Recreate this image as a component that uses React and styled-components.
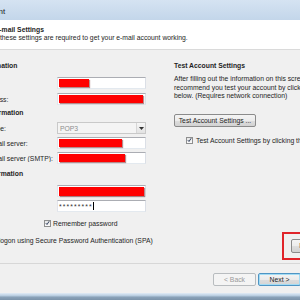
import React from "react";
import styled, { createGlobalStyle } from "styled-components";

const GlobalStyle = createGlobalStyle`
  html, body {
    margin: 0;
    padding: 0;
  }
  body {
    width: 300px;
    height: 300px;
    overflow: hidden;
    background: #f0f0f0;
    font-family: "Liberation Sans", Arial, sans-serif;
    color: #1e1e1e;
  }
`;

const Window = styled.div`
  width: 300px;
  height: 300px;
  overflow: hidden;
  display: flex;
  flex-direction: column;
  font-size: 6.8px;
`;

const TitleBar = styled.div`
  height: 20px;
  flex: none;
  display: flex;
  align-items: center;
  background: linear-gradient(#d5e3f2, #c3d6ea);
  font-size: 8px;
  color: #1b1b1b;
  white-space: nowrap;
`;

const Caption = styled.span`
  margin-left: -58px;
  margin-top: 2px;
`;

const Header = styled.div`
  height: 30px;
  flex: none;
  box-sizing: border-box;
  padding-top: 6px;
  background: #fff;
  border-bottom: 1px solid #dadada;
  line-height: 8px;
  white-space: nowrap;
`;

const HeaderLine = styled.div`
  margin-left: ${(p) => p.$indent}px;
  font-weight: ${(p) => (p.$bold ? 700 : 400)};
`;

const Body = styled.div`
  height: 213px;
  flex: none;
  overflow: hidden;
`;

const Columns = styled.div`
  display: flex;
  gap: 31px;
  margin-left: -37px;
`;

const LeftCol = styled.div`
  width: 180px;
  flex: none;
  display: flex;
  flex-direction: column;
`;

const RightCol = styled.div`
  width: 220px;
  flex: none;
  display: flex;
  flex-direction: column;
  white-space: nowrap;
`;

const Section = styled.div`
  height: 10px;
  line-height: 10px;
  margin-top: ${(p) => p.$mt}px;
  font-weight: 700;
  white-space: nowrap;
`;

const Row = styled.div`
  display: flex;
  align-items: center;
  height: 12px;
  margin-top: ${(p) => p.$mt}px;
  margin-left: ${(p) => p.$indent || 0}px;
  white-space: nowrap;
`;

const Label = styled.span`
  width: 94px;
  flex: none;
  overflow: hidden;
`;

const Field = styled.div`
  width: 89px;
  height: 12px;
  flex: none;
  box-sizing: border-box;
  display: flex;
  align-items: center;
  padding: 0 1px;
  background: #fff;
  border: 1px solid;
  border-color: #abadb3 #dbdfe6 #e3e9ef #e2e3ea;
`;

const Redact = styled.div`
  width: ${(p) => p.$w}px;
  height: ${(p) => p.$h || 8}px;
  background: #ff0000;
  box-shadow: 1px 1px 1px rgba(90, 0, 0, 0.45);
`;

const Secret = styled.span`
  letter-spacing: 1.1px;
  color: #333;
  line-height: 8px;
  padding-top: 2px;
`;

const Caret = styled.span`
  width: 1px;
  height: 8px;
  background: #000;
`;

const Select = styled.div`
  width: 89px;
  height: 12px;
  flex: none;
  box-sizing: border-box;
  display: flex;
  align-items: center;
  justify-content: space-between;
  padding-left: 2px;
  background: #f4f4f4;
  border: 1px solid #c9c9c9;
  color: #8d8d8d;
`;

const DropButton = styled.div`
  width: 9px;
  height: 10px;
  box-sizing: border-box;
  display: flex;
  align-items: center;
  justify-content: center;
  border-left: 1px solid #d6d6d6;
  background: linear-gradient(#f6f6f6, #e2e2e2);
`;

const Box = styled.div`
  width: 7px;
  height: 7px;
  flex: none;
  box-sizing: border-box;
  display: flex;
  align-items: center;
  justify-content: center;
  border: 1px solid #8e8f8f;
  background: linear-gradient(#e6e6e6, #fafafa);
  margin-right: ${(p) => p.$gap}px;
`;

const Para = styled.div`
  margin-top: 4px;
  line-height: 8.5px;
`;

const Button = styled.div`
  width: ${(p) => p.$w}px;
  height: ${(p) => p.$h || 13}px;
  flex: none;
  box-sizing: border-box;
  display: flex;
  align-items: center;
  justify-content: center;
  margin-top: ${(p) => p.$mt || 0}px;
  border: 1px solid #8b8b8b;
  border-radius: 2px;
  background: linear-gradient(#f4f4f4 0%, #ececec 50%, #dedede 51%, #d2d2d2 100%);
  color: ${(p) => (p.$disabled ? "#9a9a9a" : "#1e1e1e")};
  white-space: nowrap;
  ${(p) =>
    p.$disabled &&
    `
    border-color: #b8bcbf;
    background: #f4f4f4;
  `}
  ${(p) =>
    p.$default &&
    `
    border-color: #4f95c4;
    box-shadow: inset 0 0 0 1px #a4dcf4;
    background: linear-gradient(#f3f3f3 0%, #ebebeb 50%, #dddddd 51%, #d4d4d4 100%);
  `}
`;

const CheckRow = styled.div`
  display: flex;
  align-items: center;
  height: 9px;
  margin-top: 9px;
  margin-left: 12px;
`;

const Highlight = styled.div`
  margin-top: 87px;
  margin-left: 108px;
  width: 80px;
  padding: 5px 7px;
  border: 2px solid #e0242a;
`;

const Footer = styled.div`
  height: 30px;
  flex: none;
  box-sizing: border-box;
  display: flex;
  gap: 2px;
  padding: 9px 0 0 213px;
  border-top: 1px solid #d7d7d7;
  background: #f0f0f0;
`;

const Frame = styled.div`
  height: 7px;
  flex: none;
  background: linear-gradient(#e2ecf6 0%, #bcd0e3 35%, #8aa2b9 60%, #7b93aa 100%);
`;

function Tick() {
  return (
    <svg width="6" height="6" viewBox="0 0 6 6">
      <path d="M1 3.2 L2.4 4.8 L5 0.9" fill="none" stroke="#1f2f4f" strokeWidth="1.1" />
    </svg>
  );
}

function CheckBox({ checked, gap }) {
  return <Box $gap={gap}>{checked && <Tick />}</Box>;
}

export default function App() {
  return (
    <>
      <GlobalStyle />
      <Window>
        <TitleBar>
          <Caption>Add New Account</Caption>
        </TitleBar>
        <Header>
          <HeaderLine $bold $indent={-32}>Internet E-mail Settings</HeaderLine>
          <HeaderLine $indent={-25}>Each of these settings are required to get your e-mail account working.</HeaderLine>
        </Header>
        <Body>
          <Columns>
            <LeftCol>
              <Section $mt={11}>User Information</Section>
              <Row $mt={6}>
                <Label>Your Name:</Label>
                <Field><Redact $w={30} /></Field>
              </Row>
              <Row $mt={4}>
                <Label>Email Address:</Label>
                <Field><Redact $w={84} /></Field>
              </Row>
              <Section $mt={3}>Server Information</Section>
              <Row $mt={4}>
                <Label>Account Type:</Label>
                <Select>
                  POP3
                  <DropButton>
                    <svg width="5" height="3" viewBox="0 0 5 3">
                      <path d="M0 0 H5 L2.5 3 Z" fill="#333" />
                    </svg>
                  </DropButton>
                </Select>
              </Row>
              <Row $mt={3}>
                <Label>Incoming mail server:</Label>
                <Field><Redact $w={63} /></Field>
              </Row>
              <Row $mt={3}>
                <Label>Outgoing mail server (SMTP):</Label>
                <Field><Redact $w={66} /></Field>
              </Row>
              <Section $mt={5}>Logon Information</Section>
              <Row $mt={6}>
                <Label>User Name:</Label>
                <Field><Redact $w={85} $h={9} /></Field>
              </Row>
              <Row $mt={3}>
                <Label>Password:</Label>
                <Field>
                  <Secret>*********</Secret>
                  <Caret />
                </Field>
              </Row>
              <Row $mt={5} $indent={81}>
                <CheckBox checked gap={2} />
                Remember password
              </Row>
              <Row $mt={5} $indent={0}>
                <CheckBox gap={3} />
                Require logon using Secure Password Authentication (SPA)
              </Row>
            </LeftCol>
            <RightCol>
              <Section $mt={11}>Test Account Settings</Section>
              <Para>
                After filling out the information on this screen, we
                <br />
                recommend you test your account by clicking the button
                <br />
                below. (Requires network connection)
              </Para>
              <Button $w={82} $mt={13}>Test Account Settings ...</Button>
              <CheckRow>
                <CheckBox checked gap={3} />
                Test Account Settings by clicking the Next button
              </CheckRow>
              <Highlight>
                <Button $w={66} $h={14}>More Settings ...</Button>
              </Highlight>
            </RightCol>
          </Columns>
        </Body>
        <Footer>
          <Button $w={43} $disabled>&lt; Back</Button>
          <Button $w={43} $default>Next &gt;</Button>
          <Button $w={43}>Cancel</Button>
        </Footer>
        <Frame />
      </Window>
    </>
  );
}
